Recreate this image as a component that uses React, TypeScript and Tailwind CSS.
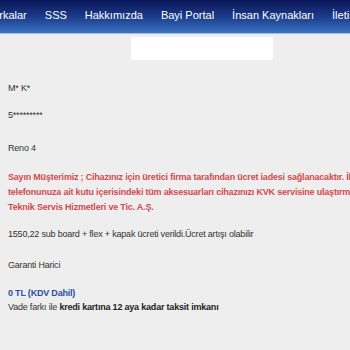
export default function App() {
  const nav = ['Markalar', 'SSS', 'Hakkımızda', 'Bayi Portal', 'İnsan Kaynakları', 'İletişim'];
  return (
    <div className="w-[350px] h-[350px] overflow-hidden bg-[#eeeeee] font-['Liberation_Sans',Arial,sans-serif]">
      <div className="h-[34px] bg-gradient-to-b from-[#0b1658] via-[#1c3a8a] to-[#3d74c4] border-b border-[#9fbbe0] flex items-center">
        <ul className="flex gap-[18px] ml-[-16px] whitespace-nowrap text-[11px] text-white pb-[2px]">
          {nav.map((n) => (
            <li key={n}>{n}</li>
          ))}
        </ul>
      </div>
      <div className="flex justify-center mt-[3px] pl-[54px]">
        <div className="w-[142px] h-[23px] bg-white rounded-[2px]" />
      </div>
      <div className="px-2 text-[9px] tracking-[-0.2px] text-[#333333] leading-[15px]">
        <p className="mt-[21px]">M* K*</p>
        <p className="mt-[12px]">5*********</p>
        <p className="mt-[18px]">Reno 4</p>
        <p className="mt-[14px] font-bold text-[#d24a4f] whitespace-nowrap">
          Sayın Müşterimiz ; Cihazınız için üretici firma tarafından ücret iadesi sağlanacaktır. İbraz edilen
          <br />
          telefonunuza ait kutu içerisindeki tüm aksesuarları cihazınızı KVK servisine ulaştırmanız gerekmektedir. KVK
          <br />
          Teknik Servis Hizmetleri ve Tic. A.Ş.
        </p>
        <p className="mt-[12px]">1550,22 sub board + flex + kapak ücreti verildi.Ücret artışı olabilir</p>
        <p className="mt-[16px]">Garanti Harici</p>
        <p className="mt-[13px] font-bold text-[#2c4fa6] leading-[14px]">0 TL (KDV Dahil)</p>
        <p className="leading-[14px]">
          Vade farkı ile <b className="text-[#222]">kredi kartına 12 aya kadar taksit imkanı</b>
        </p>
      </div>
    </div>
  );
}
